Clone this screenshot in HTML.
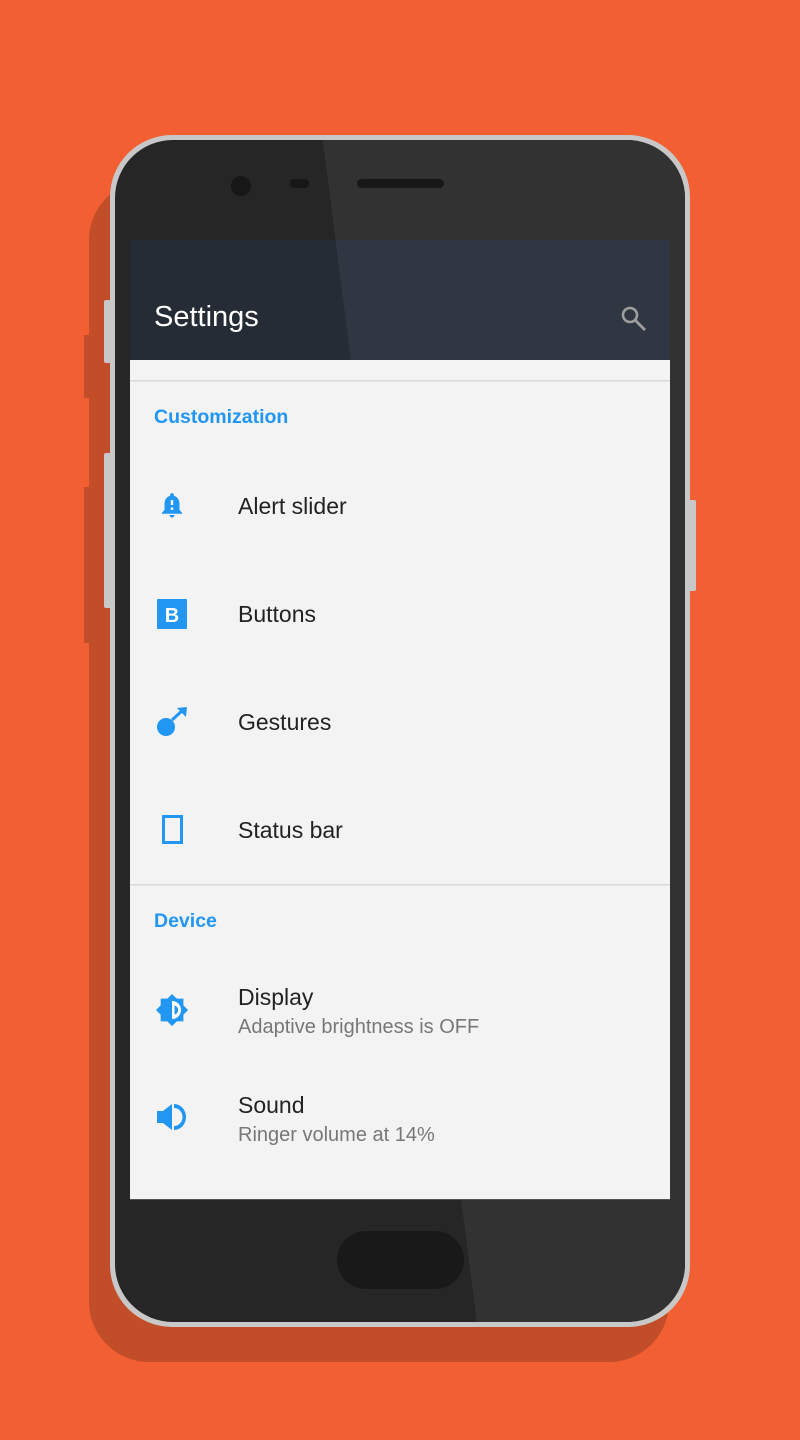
<!DOCTYPE html>
<html><head><meta charset="utf-8"><style>
html,body{margin:0;padding:0;width:800px;height:1440px;overflow:hidden;background:#f25f33;font-family:"Liberation Sans",Roboto,sans-serif}
.a{position:absolute}
.t{position:absolute;left:238px;font-size:23px;color:#222;white-space:nowrap}
.s{position:absolute;left:238px;font-size:20px;color:#777;white-space:nowrap}
.h{position:absolute;left:154px;font-size:19.5px;color:#2196f3;font-weight:bold;white-space:nowrap}
</style></head><body>
<svg class="a" style="left:0;top:0" width="800" height="1440" viewBox="0 0 800 1440">
<defs><clipPath id="ph"><rect x="115" y="140" width="570" height="1182" rx="58"/></clipPath></defs>
<rect x="89" y="180" width="580" height="1182" rx="60" fill="#c24e29"/>
<rect x="84" y="335" width="8" height="63" fill="#c24e29"/>
<rect x="84" y="487" width="8" height="156" fill="#c24e29"/>
<rect x="104" y="300" width="8" height="63" rx="2" fill="#c8c8c8"/>
<rect x="104" y="453" width="8" height="155" rx="2" fill="#c8c8c8"/>
<rect x="688" y="500" width="8" height="91" rx="2" fill="#c8c8c8"/>
<rect x="110" y="135" width="580" height="1192" rx="62" fill="#c8c8c8"/>
<g clip-path="url(#ph)">
<rect x="110" y="135" width="580" height="1192" fill="#262626"/>
<polygon points="322,135 700,135 700,1330 478,1330" fill="#323232"/>
</g>
<circle cx="241" cy="186" r="10" fill="#171717"/>
<rect x="290" y="179" width="19" height="9" rx="4" fill="#171717"/>
<rect x="357" y="179" width="87" height="9" rx="4.5" fill="#171717"/>
<rect x="337" y="1231" width="127" height="58" rx="29" fill="#191919"/>
<rect x="130" y="240" width="540" height="960" fill="#f3f3f3"/>
<rect x="130" y="240" width="540" height="120" fill="#262c35"/>
<polygon points="335.5,240 670,240 670,360 351,360" fill="#303742"/>
<rect x="130" y="1199" width="540" height="1" fill="#555"/>
<rect x="130" y="380" width="540" height="1.5" fill="#d8d8d8"/>
<rect x="130" y="884" width="540" height="1.5" fill="#d8d8d8"/>
<circle cx="630" cy="315" r="7" fill="none" stroke="#9e9e9e" stroke-width="2.6"/>
<line x1="635" y1="320" x2="645" y2="330" stroke="#9e9e9e" stroke-width="2.8"/>
<g transform="translate(157,490) scale(1.25)" fill="#2196f3"><path d="M18 16v-5c0-3.07-1.64-5.64-4.5-6.32V4c0-.83-.67-1.5-1.5-1.5s-1.5.67-1.5 1.5v.68C7.63 5.36 6 7.92 6 11v5l-2 2v1h16v-1l-2-2zm-5 0h-2v-2h2v2zm0-4h-2V8h2v4zm-1 10c1.1 0 2-.9 2-2h-4c0 1.1.89 2 2 2z"/></g>
<rect x="157" y="599" width="30" height="30" rx="1" fill="#2196f3"/>
<text x="172" y="622" text-anchor="middle" font-family="Liberation Sans" font-weight="bold" font-size="20" fill="#fff">B</text>
<circle cx="166" cy="727" r="9" fill="#2196f3"/>
<line x1="172" y1="720" x2="183" y2="710" stroke="#2196f3" stroke-width="3"/>
<polygon points="177,708 187,707 186,717" fill="#2196f3"/>
<rect x="163.5" y="816.5" width="18" height="26" fill="none" stroke="#2196f3" stroke-width="3"/>
<g transform="translate(155,993) scale(1.42)" fill="#2196f3"><path d="M20 15.31L23.31 12 20 8.69V4h-4.69L12 .69 8.69 4H4v4.69L.69 12 4 15.31V20h4.69L12 23.31 15.31 20H20v-4.69z"/></g>
<path d="M172 1001 A9 9 0 0 1 172 1019 Z" fill="#fff"/>
<path d="M174.5 1005.5 A4.6 4.6 0 0 1 174.5 1014.5 Z" fill="#2196f3"/>
<path d="M157 1111 H163 L172 1104 V1130 L163 1123 H157 Z" fill="#2196f3"/>
<path d="M174 1104 A12 13 0 0 1 174 1130 V1126 A8.5 9 0 0 0 174 1108 Z" fill="#2196f3"/>
</svg>
<div class="a" style="left:154px;top:301px;font-size:29px;color:#fff;font-weight:500">Settings</div>
<div class="h" style="top:406px">Customization</div>
<div class="t" style="top:493px">Alert slider</div>
<div class="t" style="top:601px">Buttons</div>
<div class="t" style="top:709px">Gestures</div>
<div class="t" style="top:817px">Status bar</div>
<div class="h" style="top:910px">Device</div>
<div class="t" style="top:984px">Display</div>
<div class="s" style="top:1016px">Adaptive brightness is OFF</div>
<div class="t" style="top:1092px">Sound</div>
<div class="s" style="top:1124px">Ringer volume at 14%</div>
</body></html>
